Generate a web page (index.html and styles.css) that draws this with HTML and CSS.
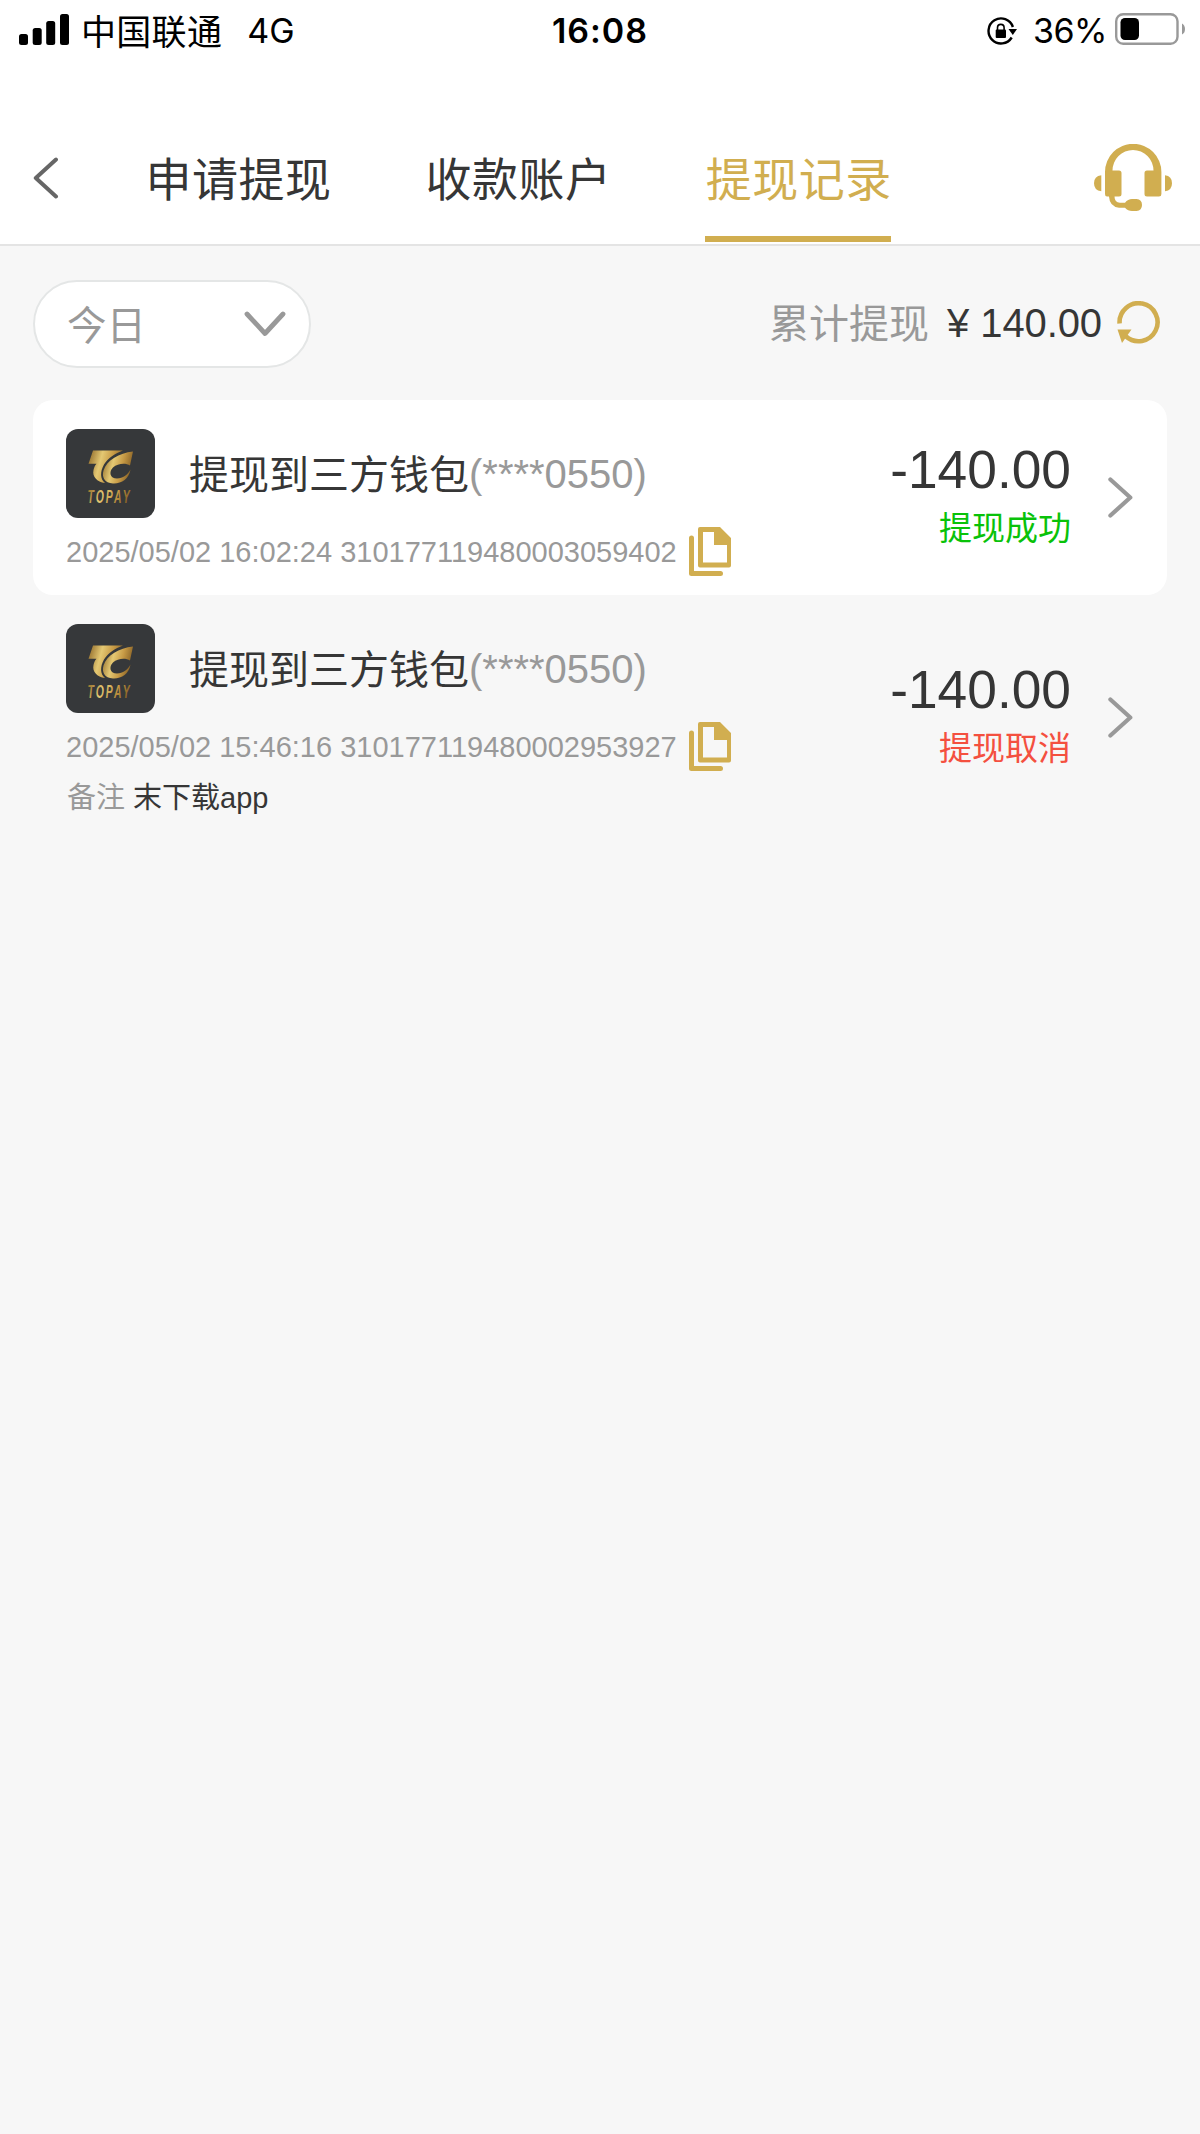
FILE: index.html
```html
<!DOCTYPE html>
<html lang="zh-CN">
<head>
<meta charset="utf-8">
<title>提现记录</title>
<link rel="stylesheet" href="styles.css">
</head>
<body>
<svg class="defs" aria-hidden="true">
  <defs>
    <linearGradient id="gold" x1="0" y1="0" x2="1" y2="0.25">
      <stop offset="0" stop-color="#8a6425"/>
      <stop offset="0.4" stop-color="#e4c873"/>
      <stop offset="0.7" stop-color="#c79a45"/>
      <stop offset="1" stop-color="#8c6528"/>
    </linearGradient>
    <symbol id="logo" viewBox="0 0 89 89">
      <path fill="url(#gold)" d="M27 21.500H57C49 24.500 42 29 38 35.500C34 42.500 34 50 39 54C31 53 26 47.500 27.500 41C28 38.500 29 36.500 30.500 34.800H22.500Z"/>
      <path fill="url(#gold)" d="M67 22.500L64 36.500C60 33.800 52 34 47 38.500C42.500 43 44 49.500 51 49.500C57 49.500 61.500 46 64.500 40.500C63 50 55 55 47 54.500C38.500 54 35.500 48 37.500 41.500C41 31 53 24 67 22.500Z"/>
      <text x="0" y="0" transform="translate(21.500 73.500) scale(0.58 1)" class="logo-text" fill="url(#gold)">TOPAY</text>
    </symbol>
    <symbol id="copy" viewBox="0 0 42 49">
      <path fill="none" stroke="#d1ae50" stroke-width="5" stroke-linecap="round" stroke-linejoin="round" d="M2.500 11V46.500H31.500"/>
      <path fill="#d1ae50" fill-rule="evenodd" d="M11 0H31L42 11V38.500Q42 40.500 40 40.500H11Q9 40.500 9 38.500V2Q9 0 11 0ZM14 5V35.500H38V18H25V5Z"/>
    </symbol>
    <symbol id="arrow" viewBox="0 0 25 41">
      <path fill="none" stroke="#999" stroke-width="4.200" stroke-linecap="round" stroke-linejoin="round" d="M2.400 2.500L22.300 20.500L2.400 38.500"/>
    </symbol>
  </defs>
</svg>

<header class="top">
  <div class="status">
    <div class="status-left">
      <svg width="50" height="31" viewBox="0 0 50 31"><rect y="20" width="9" height="11" rx="2.500"/><rect x="13.700" y="14" width="9" height="17" rx="2.500"/><rect x="27.200" y="7" width="9" height="24" rx="2.500"/><rect x="41" width="9" height="31" rx="2.500"/></svg>
      <span class="carrier">中国联通</span><span class="network">4G</span>
    </div>
    <div class="clock">16:08</div>
    <div class="status-right">
      <svg width="30" height="28" viewBox="0 0 30 28"><path d="M25.900 10A12.500 12.500 0 1 0 24.700 20.500" fill="none" stroke="#000" stroke-width="2.400"/><path d="M21.500 12H30L25.800 18Z"/><rect x="8.700" y="12.500" width="10.300" height="8.500" rx="1"/><path d="M10.500 13V10.700a3.300 3.300 0 0 1 6.600 0V13" fill="none" stroke="#000" stroke-width="1.600"/></svg>
      <span class="percent">36%</span>
      <svg class="battery" width="70" height="32" viewBox="0 0 70 32"><rect x="1.200" y="1.200" width="61.300" height="29.600" rx="7" fill="#fff" stroke="#999" stroke-width="2.400"/><rect x="5.500" y="5" width="18.500" height="22" rx="4.500"/><path d="M67 10.500Q70 12 70 16T67 21.500Z" fill="#999"/></svg>
    </div>
  </div>
  <nav class="nav">
    <svg class="back" width="26" height="42" viewBox="0 0 26 42"><path d="M23 2.500L2.800 21L23 39.500" fill="none" stroke="#666" stroke-width="4" stroke-linecap="round" stroke-linejoin="round"/></svg>
    <div class="tabs">
      <span class="tab">申请提现</span>
      <span class="tab">收款账户</span>
      <span class="tab active">提现记录</span>
    </div>
    <svg class="service" width="78" height="67" viewBox="0 0 78 67" fill="#d1ae50"><path d="M11 50V28A28.200 28.200 0 0 1 67.400 28V50Q67.400 52.500 65 52.500H53Q50.500 52.500 50.500 50V29Q50.500 26.500 53 26.500H59.500A20.500 20.500 0 0 0 18.500 26.500H25Q27.500 26.500 27.500 29V50Q27.500 52.500 25 52.500H20.500Q20.500 58.500 26 58.700H31Q34 55 38 55H42.500Q48 55.500 48 61T42.500 67H38Q34 67 31 63.700H25Q15.500 62.500 15 52.500H13Q11 52.500 11 50Z"/><path d="M7.300 31.300V47.300Q0 46.500 0 39.300T7.300 31.300ZM71 31.300V47.300Q78 46.500 78 39.300T71 31.300Z"/></svg>
  </nav>
</header>

<main>
  <div class="filter">
    <div class="select"><span>今日</span><svg width="42" height="26" viewBox="0 0 42 26"><path d="M3 3L21 22.500L39 3" fill="none" stroke="#999" stroke-width="4.800" stroke-linecap="round" stroke-linejoin="round"/></svg></div>
    <div class="total">
      <span class="label">累计提现</span><span class="sum">¥ 140.00</span>
      <svg width="43" height="43" viewBox="0 0 43 43"><path d="M2.600 22.500A19 19 0 1 1 8.800 35.300" fill="none" stroke="#d1ae50" stroke-width="4.600"/><path d="M0.500 28.500H14.500L5 42Z" fill="#d1ae50"/></svg>
    </div>
  </div>

  <section class="records">
    <article class="record">
      <div class="info">
        <div class="title"><svg class="logo"><use href="#logo"/></svg><span class="name">提现到三方钱包</span><span class="account">(****0550)</span></div>
        <div class="order"><span>2025/05/02 16:02:24 310177119480003059402</span><svg class="copy"><use href="#copy"/></svg></div>
      </div>
      <div class="result"><span class="amount">-140.00</span><span class="state success">提现成功</span></div>
      <svg class="arrow"><use href="#arrow"/></svg>
    </article>
    <article class="record plain">
      <div class="info">
        <div class="title"><svg class="logo"><use href="#logo"/></svg><span class="name">提现到三方钱包</span><span class="account">(****0550)</span></div>
        <div class="order"><span>2025/05/02 15:46:16 310177119480002953927</span><svg class="copy"><use href="#copy"/></svg></div>
        <div class="remark"><span class="remark-label">备注</span><span>末下载app</span></div>
      </div>
      <div class="result"><span class="amount">-140.00</span><span class="state cancelled">提现取消</span></div>
      <svg class="arrow"><use href="#arrow"/></svg>
    </article>
  </section>
</main>
</body>
</html>
```
FILE: styles.css
```css
* { box-sizing: border-box; }
body {
  margin: 0;
  min-height: 2134px;
  background: #f7f7f7;
  color: #363636;
  font-family: "Liberation Sans", "Noto Sans CJK SC", sans-serif;
}
svg { display: block; flex: none; }
span { white-space: nowrap; }
.defs { position: absolute; width: 0; height: 0; }

.top { height: 246px; background: #fff; border-bottom: 2px solid #e4e4e4; }
.status {
  display: grid;
  grid-template-columns: 1fr auto 1fr;
  align-items: center;
  height: 60px;
  padding: 0 15px 0 19px;
  color: #000;
  font-family: Inter, "Noto Sans CJK SC", sans-serif;
  font-size: 34px;
  line-height: 60px;
}
.status-left, .status-right { display: flex; align-items: center; height: 60px; }
.status-left svg { margin-bottom: 3px; }
.carrier { padding-top: 2px; margin-left: 12px; font-size: 35px; letter-spacing: 0.300px; }
.network { margin-left: 25px; padding-top: 1px; }
.clock { padding: 1px 4px 0 0; font-weight: 600; letter-spacing: 1px; }
.status-right { justify-content: flex-end; }
.percent { margin-left: 16px; padding-top: 1px; letter-spacing: -0.500px; }
.battery { margin-left: 8px; margin-bottom: 3px; }

.nav { display: flex; align-items: center; height: 184px; padding: 0 28px 0 33px; }
.back { margin-top: 51px; }
.tabs { display: flex; align-self: stretch; gap: 93.300px; margin-left: 85.500px; }
.tab {
  width: 186.800px;
  height: 182px;
  padding: 85px 0 0 1px;
  border-bottom: 6px solid transparent;
  font-size: 46px;
  letter-spacing: 0.500px;
  line-height: 70px;
}
.tab.active { color: #d1ae50; border-color: #d1ae50; }
.service { margin: 51px 0 0 auto; }

.filter { display: flex; align-items: center; justify-content: space-between; padding: 34px 40px 0 33px; }
.select {
  display: flex;
  align-items: center;
  justify-content: space-between;
  width: 278px;
  height: 88px;
  padding: 0 23px 0 32px;
  border: 2px solid #e4e6e6;
  border-radius: 44px;
  background: #fff;
  color: #999;
  font-size: 39.500px;
}
.select span { padding-bottom: 4px; }
.total { display: flex; align-items: center; font-size: 40px; }
.label { padding-bottom: 6px; color: #999; }
.sum { margin: 0 15px 0 18px; padding-bottom: 2px; letter-spacing: -0.100px; }
.total svg { margin-bottom: 3px; }

.records { margin: 32px 33px 0; }
.record {
  display: flex;
  align-items: center;
  height: 195px;
  padding: 0 34px 0 33px;
  border-radius: 20px;
  background: #fff;
}
.record.plain { height: 245px; background: transparent; }
.info { flex: 1; align-self: stretch; padding-top: 29px; }
.title { display: flex; align-items: center; height: 89px; font-size: 40px; }
.logo { width: 89px; height: 89px; margin-right: 34px; border-radius: 12px; background: #36383a; }
.logo-text { font: italic bold 18px "Liberation Sans", sans-serif; letter-spacing: 3.500px; }
.name { padding-bottom: 4px; }
.account { padding-top: 2px; }
.account, .order, .remark-label { color: #999; }
.order { display: flex; align-items: center; gap: 12px; height: 67px; font-size: 29px; }
.order span { padding-top: 2px; }
.copy { width: 42px; height: 49px; }
.remark { display: flex; gap: 8px; height: 32px; padding: 2px 0 0 1px; font-size: 29px; line-height: 32px; }
.result { display: flex; flex-direction: column; align-items: flex-end; margin-right: 37px; }
.amount { font-size: 53.300px; line-height: 62px; }
.state { padding-top: 1px; font-size: 33px; line-height: 54px; }
.success { color: #09c209; }
.cancelled { color: #f4503f; }
.arrow { width: 25px; height: 41px; }
```
